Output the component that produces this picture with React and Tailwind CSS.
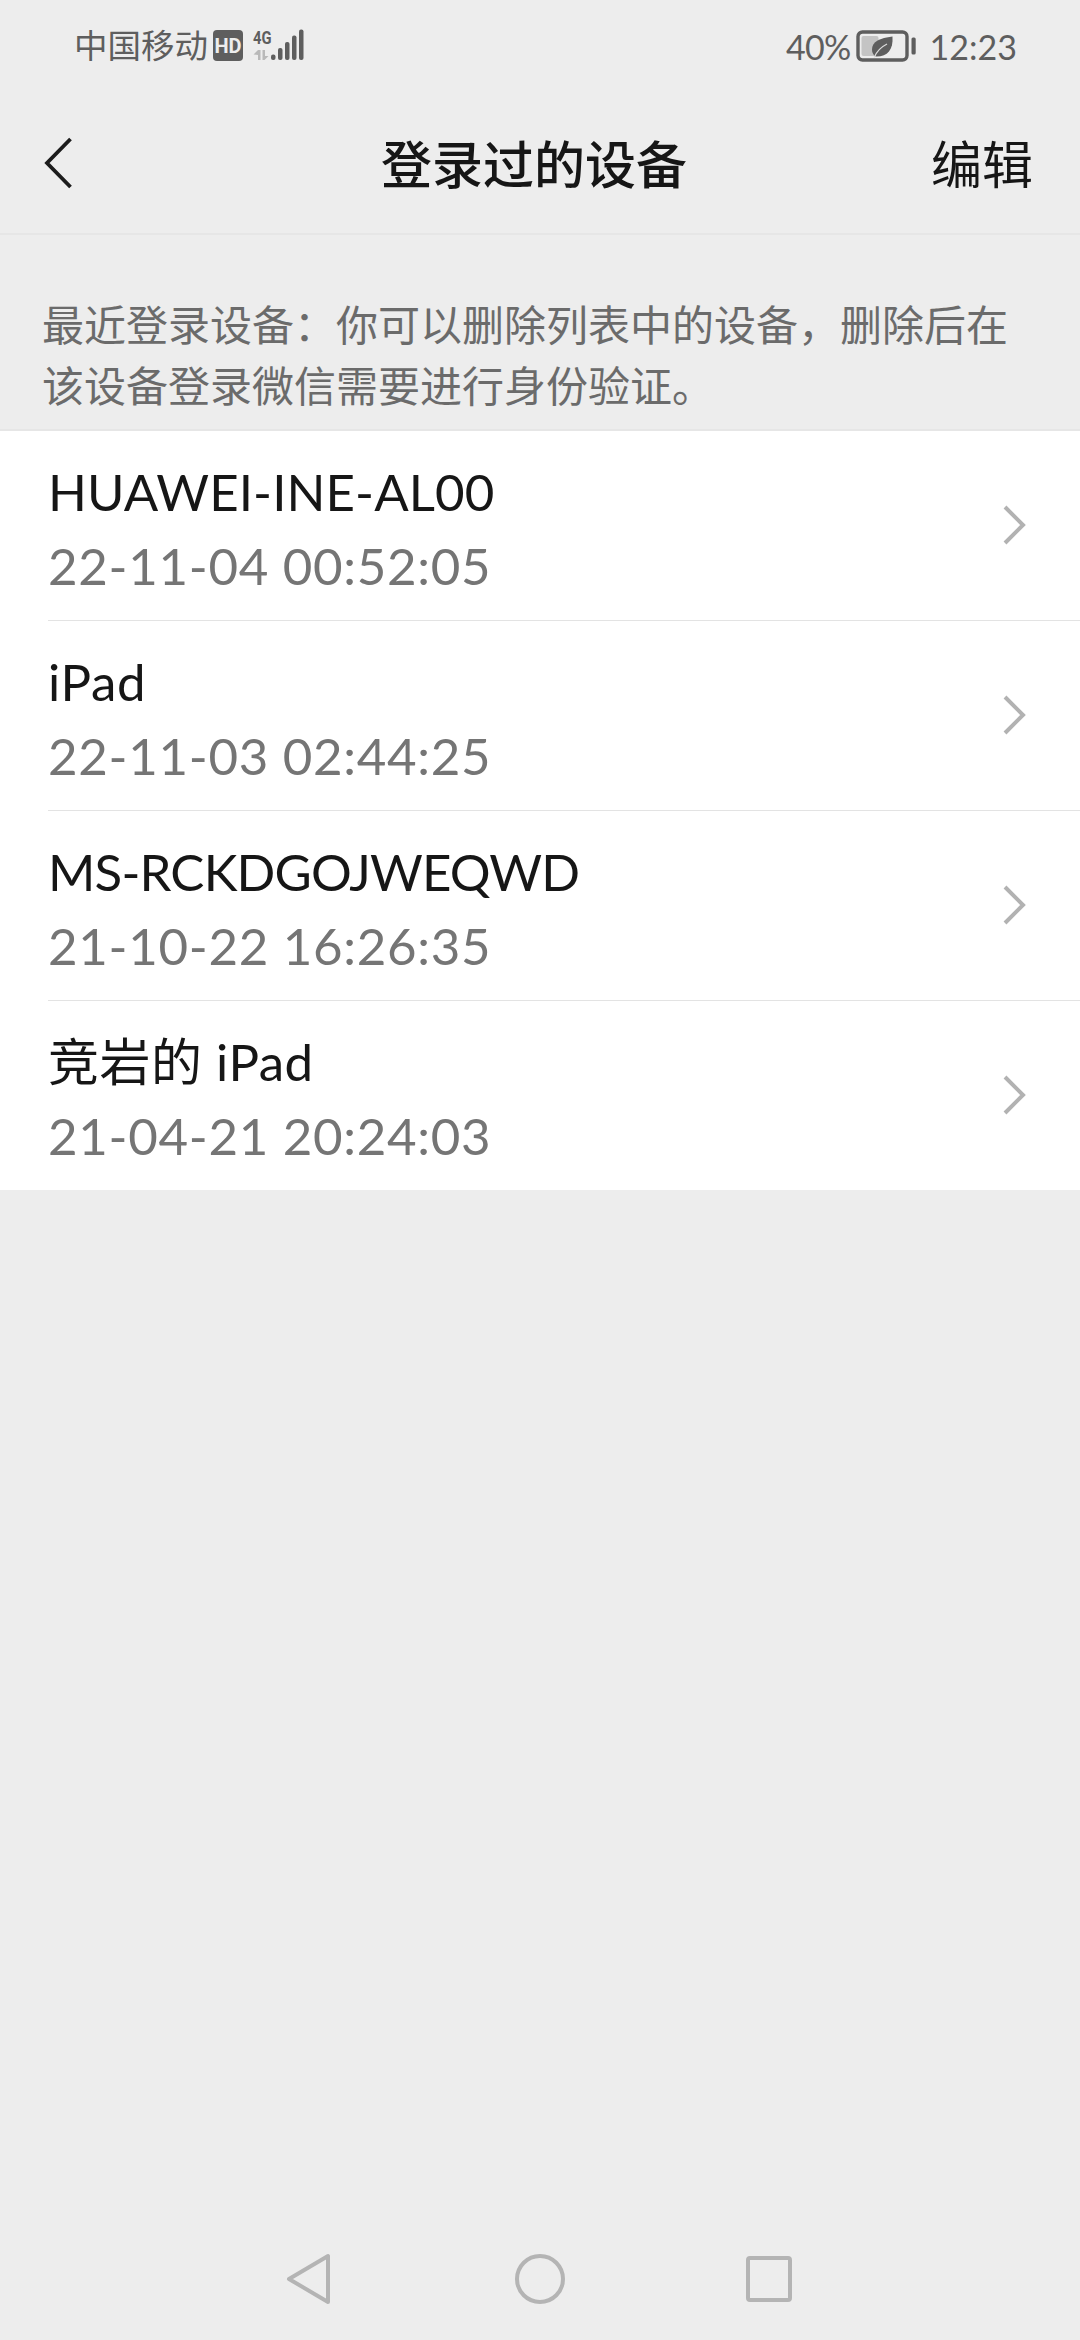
import React from "react";

const devices = [
  { name: "HUAWEI-INE-AL00", time: "22-11-04 00:52:05", tracking: "tracking-[0.1px]" },
  { name: "iPad", time: "22-11-03 02:44:25", tracking: "tracking-[0.7px]" },
  { name: "MS-RCKDGOJWEQWD", time: "21-10-22 16:26:35", tracking: "tracking-[-0.8px]" },
  { name: "竞岩的 iPad", time: "21-04-21 20:24:03", tracking: "tracking-[0.5px]" },
];

const SignalIcon = () => (
  <svg width="54" height="44" viewBox="-2 -4 54 44" className="ml-2 overflow-visible">
    <text
      x="-1"
      y="16"
      fontSize="19"
      fontWeight="700"
      fill="#5e5e5e"
      textLength="18.5"
      lengthAdjust="spacingAndGlyphs"
      className="font-['Roboto']"
    >
      4G
    </text>
    <g fill="#b9b9b9">
      <path d="M-0.500 26.500 4 22h2.500v10H4v-5z" />
      <path d="M8.500 22H11v6h3.500l-4 4h-2z" />
    </g>
    <g fill="#5e5e5e">
      <rect x="17" y="26.500" width="4.500" height="5.500" rx="2" />
      <rect x="24" y="20" width="4.500" height="12" rx="2" />
      <rect x="31" y="14" width="4.500" height="18" rx="2" />
      <rect x="38" y="7.500" width="4.500" height="24.500" rx="2" />
      <rect x="45" y="1.500" width="4.500" height="30.500" rx="2" />
    </g>
  </svg>
);

const BatteryIcon = () => (
  <svg width="60" height="32" viewBox="0 0 60 32" fill="none" className="ml-[5px]">
    <rect x="2" y="2" width="49" height="28" rx="4.5" stroke="#5e5e5e" strokeWidth="3.4" />
    <rect x="5.500" y="6" width="17" height="20" rx="2" fill="#c4c4c4" />
    <path
      d="M36.500 6.500C24 8 16 11.500 16 19.500c0 3 1.300 5.500 3.500 7C31 27 37.500 20 36.500 6.500z"
      fill="#5e5e5e"
    />
    <path d="M18.300 27.500C20.500 21.500 25 17 31 14" stroke="#dcdcdc" strokeWidth="1.300" />
    <rect x="55.500" y="7.500" width="4.200" height="17" rx="1.500" fill="#5e5e5e" />
  </svg>
);

const StatusBar = () => (
  <div className="flex h-[92px] items-center justify-between pl-[74px] pr-[63px] text-[#5e5e5e]">
    <div className="flex items-center">
      <span className="text-[33.5px] leading-none">中国移动</span>
      <span className="mb-px ml-[5px] mr-px flex h-[31px] w-[30px] items-center justify-center rounded bg-[#5e5e5e] font-['Roboto'] text-[20px] font-bold leading-none text-[#ededed]">
        HD
      </span>
      <SignalIcon />
    </div>
    <div className="flex items-center">
      <span className="pt-0.5 text-[34px] leading-none tracking-[-0.7px]">40%</span>
      <BatteryIcon />
      <span className="ml-3.5 pt-0.5 text-[34px] leading-none">12:23</span>
    </div>
  </div>
);

const Header = () => (
  <header className="flex h-[143px] items-center justify-between border-b-2 border-[#e6e6e6] pl-[43px] pr-[47px] pt-1 text-[#161616]">
    <div className="w-[338px]">
      <svg width="30" height="52" viewBox="0 0 30 52" fill="none" className="mb-1">
        <path d="M27.500 2 4 26l23.500 24" stroke="#1c1c1c" strokeWidth="3.800" />
      </svg>
    </div>
    <h1 className="text-[51px] font-medium leading-none">登录过的设备</h1>
    <button className="w-[346px] text-right text-[51px] leading-none">编辑</button>
  </header>
);

const DeviceRow = ({ name, time, tracking }) => (
  <li className="group flex h-[190px] items-stretch pl-12">
    <div className="flex flex-1 items-center justify-between border-b border-[#e3e3e3] pr-[54px] group-last:border-transparent">
      <div className="pt-[7px] text-[51px] leading-[74px]">
        <p className={`text-[#161616] ${tracking}`}>{name}</p>
        <p className="tracking-[0.7px] text-[#757575]">{time}</p>
      </div>
      <svg width="23" height="40" viewBox="0 0 23 40" fill="none" className="mb-0.5">
        <path d="m2 2 18 18L2 38" stroke="#b2b2b2" strokeWidth="4" />
      </svg>
    </div>
  </li>
);

const NavBar = () => (
  <nav className="flex h-[122px] items-center justify-between pl-[285px] pr-[286px]">
    <svg width="48" height="54" viewBox="0 0 48 54" fill="none">
      <path
        d="M43 4v46L4 27z"
        stroke="#b4b4b4"
        strokeWidth="4"
        strokeLinejoin="round"
      />
    </svg>
    <svg width="54" height="54" viewBox="0 0 54 54" fill="none">
      <circle cx="27" cy="27" r="23" stroke="#b4b4b4" strokeWidth="4" />
    </svg>
    <svg width="48" height="54" viewBox="0 0 48 54" fill="none">
      <rect x="2" y="6" width="42" height="42" rx="2" stroke="#b4b4b4" strokeWidth="4" />
    </svg>
  </nav>
);

const App = () => (
  <div className="flex h-[2340px] w-[1080px] flex-col bg-[#ededed] font-['Lato','Noto_Sans_CJK_SC',sans-serif]">
    <StatusBar />
    <Header />
    <main className="flex-1">
      <p className="h-[196px] whitespace-nowrap border-b-2 border-[#e6e6e6] pl-[42px] pt-[60px] text-[42px] leading-[61px] text-[#6b6b6b]">
        最近登录设备：你可以删除列表中的设备，删除后在
        <br />
        该设备登录微信需要进行身份验证。
      </p>
      <ul className="h-[759px] overflow-hidden bg-white">
        {devices.map((device) => (
          <DeviceRow key={device.name} {...device} />
        ))}
      </ul>
    </main>
    <NavBar />
  </div>
);

export default App;
